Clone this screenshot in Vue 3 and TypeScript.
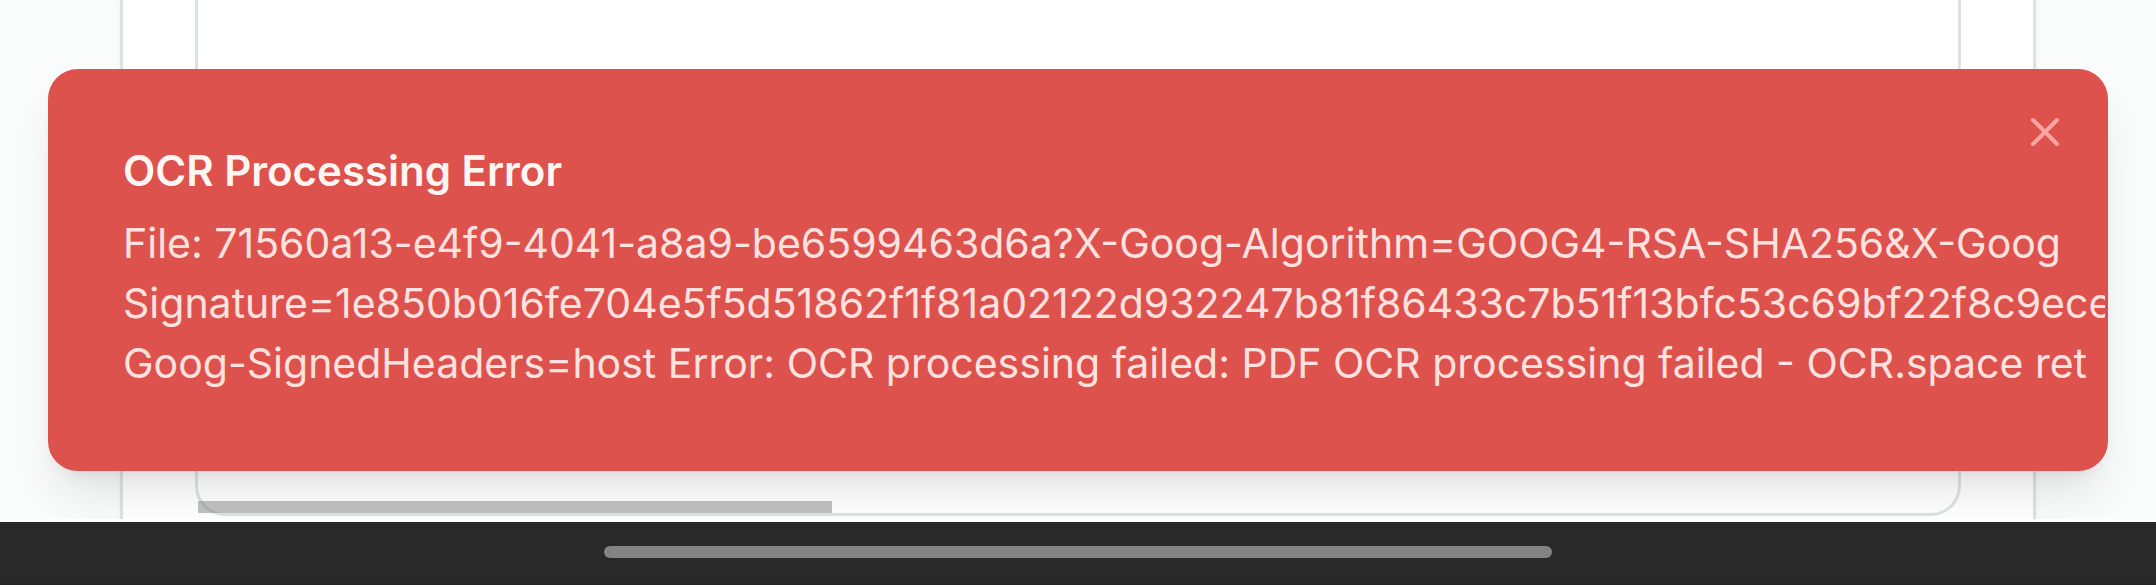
<script setup lang="ts">
import { ref } from 'vue'

const open = ref(true)
const title = 'OCR Processing Error'
const lines: string[] = [
  'File: 71560a13-e4f9-4041-a8a9-be6599463d6a?X-Goog-Algorithm=GOOG4-RSA-SHA256&X-Goog',
  'Signature=1e850b016fe704e5f5d51862f1f81a02122d932247b81f86433c7b51f13bfc53c69bf22f8c9ece',
  'Goog-SignedHeaders=host Error: OCR processing failed: PDF OCR processing failed - OCR.space ret',
]
</script>

<template>
  <div class="screen">
    <main class="page">
      <section class="panel">
        <div class="viewer">
          <div class="scroll-thumb"></div>
        </div>
      </section>
      <div v-if="open" class="toast" role="alert">
        <div class="toast-body">
          <h2 class="toast-title">{{ title }}</h2>
          <p class="toast-text">
            <span v-for="line in lines" :key="line" class="toast-line">{{ line }}</span>
          </p>
        </div>
        <button class="close" type="button" aria-label="Close" @click="open = false">
          <svg viewBox="0 0 24 24" fill="none" stroke="currentColor" stroke-width="2" stroke-linecap="round" stroke-linejoin="round" aria-hidden="true">
            <path d="M18 6 6 18" />
            <path d="m6 6 12 12" />
          </svg>
        </button>
      </div>
    </main>
    <footer class="nav-bar">
      <div class="nav-handle"></div>
    </footer>
  </div>
</template>

<style>
body {
  margin: 0;
  background: #ffffff;
}
</style>

<style scoped>
.screen {
  display: flex;
  flex-direction: column;
  min-height: 100vh;
  overflow: hidden;
  font-family: Inter, "Open Sans", sans-serif;
}

.page {
  position: relative;
  flex: 1;
  display: flex;
  box-sizing: border-box;
  padding: 0 120px;
  overflow: hidden;
  border-bottom: 3px solid #ffffff;
  background: #fafcfb;
}

.panel {
  flex: 1;
  display: flex;
  box-sizing: border-box;
  padding: 0 72px 3px;
  border: solid #dce4e2;
  border-width: 0 3px;
  background: #ffffff;
  box-shadow: 0 3px 6px rgba(0, 0, 0, 0.05);
}

.viewer {
  flex: 1;
  display: flex;
  align-items: flex-end;
  border: 3px solid #dce4e2;
  border-top: 0;
  border-radius: 0 0 30px 30px;
}

.scroll-thumb {
  width: 36%;
  height: 12px;
  position: relative;
  z-index: 2;
  background: rgba(128, 128, 128, 0.5);
}

.toast {
  position: absolute;
  z-index: 1;
  right: 48px;
  bottom: 48px;
  left: 48px;
  box-sizing: border-box;
  padding: 69px 72px 75px;
  overflow: hidden;
  border: 3px solid #dd524c;
  border-radius: 30px;
  background: #dd524c;
  box-shadow: 0 30px 45px -9px rgba(0, 0, 0, 0.1), 0 12px 18px -12px rgba(0, 0, 0, 0.1);
}

.toast-body {
  display: grid;
  gap: 12px;
  font-size: 41px;
  line-height: 60px;
  white-space: nowrap;
}

.toast-title {
  margin: 0;
  color: #fff5f3;
  font-size: 42px;
  font-weight: 600;
}

.toast-text {
  margin: 0;
  color: #ffe2e0;
}

.toast-line {
  display: block;
}

.close {
  position: absolute;
  top: 24px;
  right: 24px;
  padding: 12px;
  border: 0;
  background: none;
  color: #fca5a5;
  cursor: pointer;
}

.close svg {
  display: block;
  width: 48px;
  height: 48px;
}

.nav-bar {
  display: flex;
  justify-content: center;
  box-sizing: border-box;
  height: 63px;
  padding-top: 24px;
  border-bottom: 2px solid #2a2326;
  background: #292929;
}

.nav-handle {
  width: 44%;
  height: 12px;
  border-radius: 6px;
  background: #838383;
}
</style>
